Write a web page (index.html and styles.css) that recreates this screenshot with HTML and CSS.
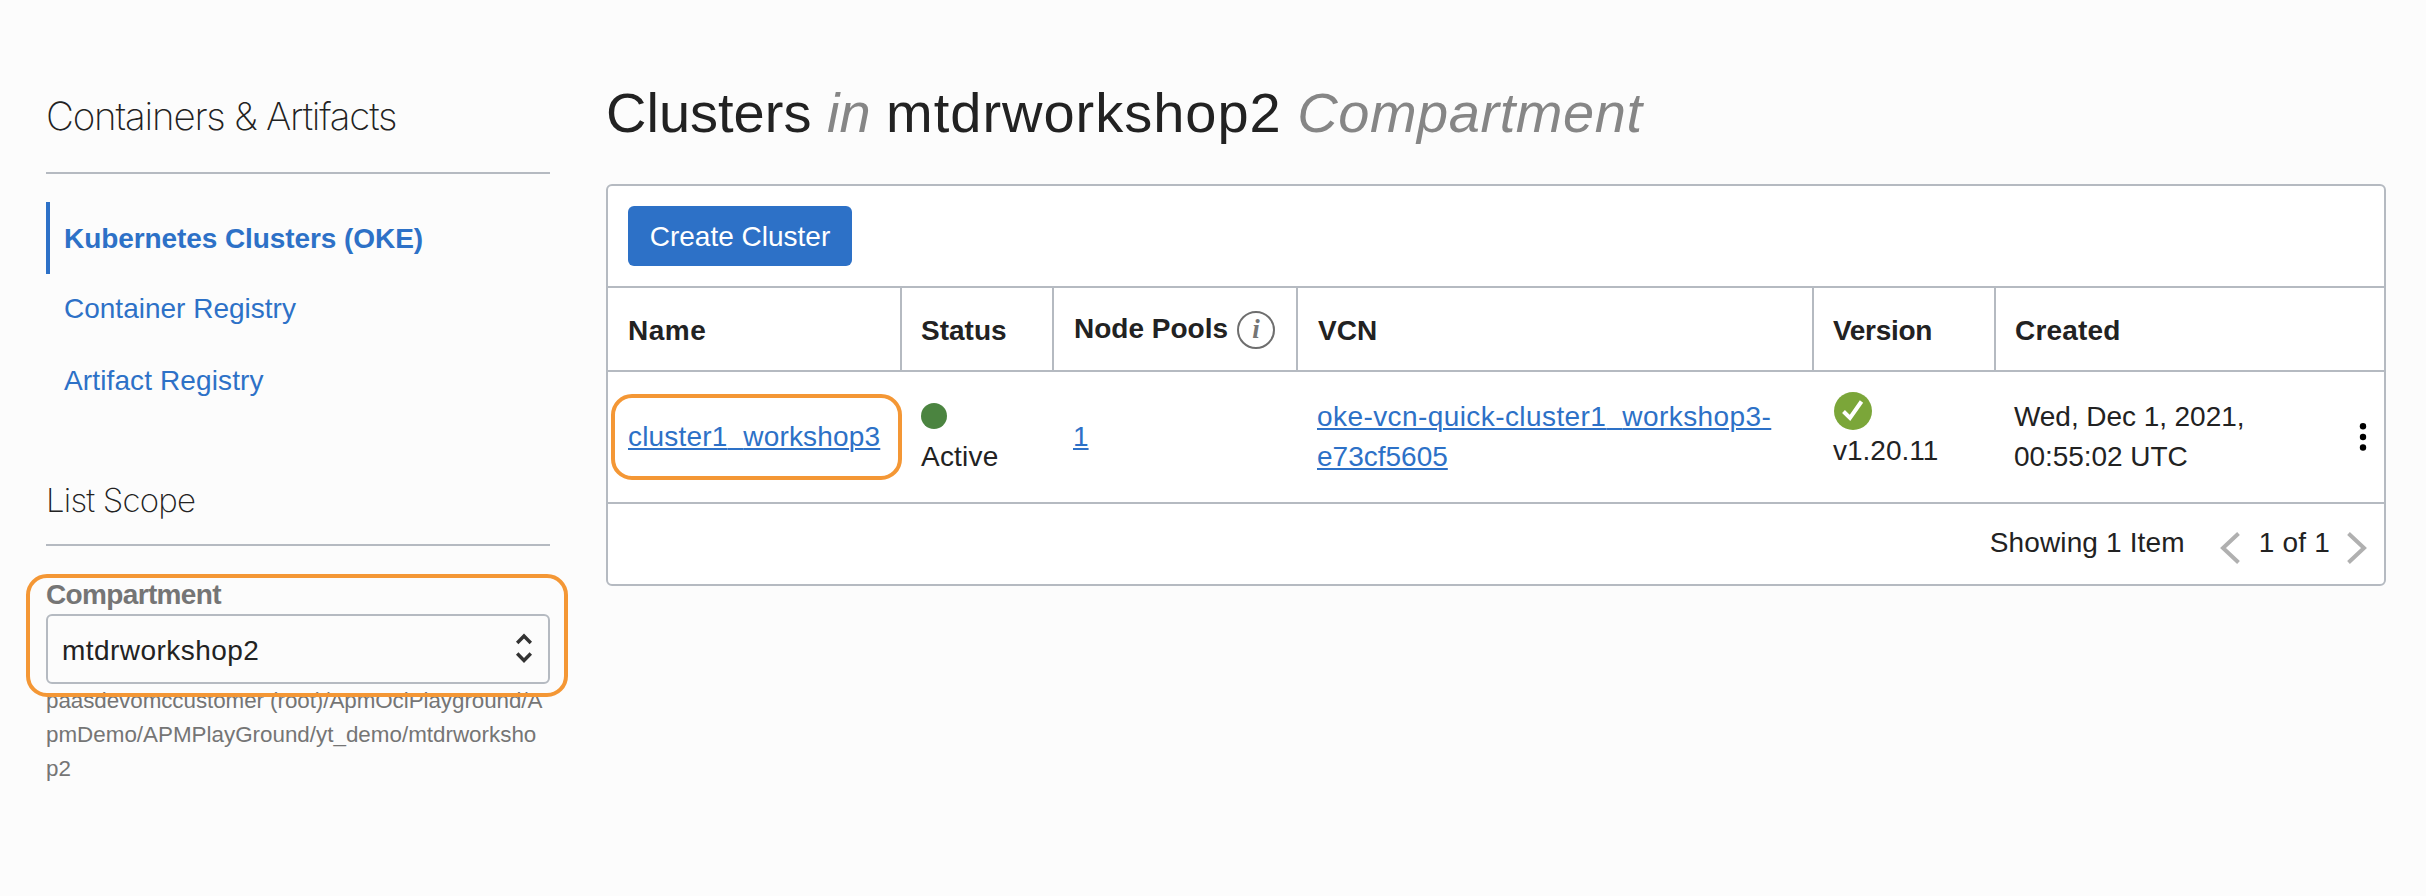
FILE: index.html
```html
<!DOCTYPE html>
<html lang="en">
<head>
<meta charset="utf-8">
<title>Clusters</title>
<link rel="stylesheet" href="styles.css">
</head>
<body>
<div class="page">
  <aside class="sidebar">
    <h2 class="side-title">Containers &amp; Artifacts</h2>
    <nav class="side-nav">
      <a class="nav-item active">Kubernetes Clusters (OKE)</a>
      <a class="nav-item">Container Registry</a>
      <a class="nav-item artifact">Artifact Registry</a>
    </nav>
    <h3 class="scope-title">List Scope</h3>
    <div class="compartment">
      <div class="label">Compartment</div>
      <div class="select"><span>mtdrworkshop2</span>
        <svg class="updown" width="20" height="34" viewBox="0 0 20 34"><path d="M3.200 12L10 5l6.800 7M3.200 22.500l6.800 7 6.800-7"/></svg>
      </div>
      <div class="path">paasdevomccustomer (root)/ApmOciPlayground/A<br><span class="path-mid">pmDemo/APMPlayGround/yt_demo/mtdrworksho</span><br>p2</div>
      <div class="highlight highlight-scope"></div>
    </div>
  </aside>
  <main class="main">
    <h1 class="title">Clusters <em>in</em> <span class="title-name">mtdrworkshop2</span> <em class="title-kind">Compartment</em></h1>
    <section class="panel">
      <div class="toolbar"><button class="create">Create Cluster</button></div>
      <div class="row head">
        <div class="cell col-name">Name</div>
        <div class="cell col-status">Status</div>
        <div class="cell pools"><span>Node Pools</span><svg class="info" width="38" height="38" viewBox="0 0 38 38"><circle cx="19" cy="19" r="18"/><text class="info-i" x="19" y="27" text-anchor="middle">i</text></svg></div>
        <div class="cell">VCN</div>
        <div class="cell col-version">Version</div>
        <div class="cell col-created">Created</div>
      </div>
      <div class="row body">
        <div class="cell name"><a class="link link-name">cluster1<span class="gap">_</span>workshop3</a><div class="highlight highlight-name"></div></div>
        <div class="cell status"><i class="dot"></i>Active</div>
        <div class="cell middle"><a class="link">1</a></div>
        <div class="cell"><a class="link"><span class="vcn-line">oke-vcn-quick-cluster1<span class="gap">_</span>workshop3-</span><br>e73cf5605</a></div>
        <div class="cell version"><svg class="check" width="38" height="38" viewBox="0 0 38 38"><circle cx="19" cy="19" r="19" fill="#7ba639"/><path d="M9.500 19.500l6.500 6.500L27.500 9.500" fill="none" stroke="#fff" stroke-width="4"/></svg>v1.20.11</div>
        <div class="cell created"><div>Wed, Dec 1, 2021,<br>00:55:02 UTC</div>
          <svg class="kebab" width="8" height="30" viewBox="0 0 8 30"><circle cx="4" cy="3.200" r="3.200"/><circle cx="4" cy="14" r="3.200"/><circle cx="4" cy="24.500" r="3.200"/></svg></div>
      </div>
      <div class="footer">
        <span class="showing">Showing 1 Item</span>
        <svg class="chev" width="20" height="32" viewBox="0 0 20 32"><path d="M18.500 1.500L3 16l15.500 14.500"/></svg>
        <span class="pages">1 of 1</span>
        <svg class="chev" width="20" height="32" viewBox="0 0 20 32"><path d="M1.500 1.500L17 16 1.500 30.500"/></svg>
      </div>
    </section>
  </main>
</div>
</body>
</html>
```

FILE: styles.css
```css
* { box-sizing: border-box; }
body {
  margin: 0;
  background: #fcfcfc;
  color: #222;
  font: 28px/40px "Liberation Sans", Arial, sans-serif;
}
.page { display: flex; height: 896px; overflow: hidden; }
.sidebar { width: 606px; padding: 88px 56px 0 46px; }
h1, h2, h3 { margin: 0; }
.side-title {
  height: 86px;
  border-bottom: 2px solid #b5bac1;
  font: 200 38.500px/56px Inter, sans-serif;
  letter-spacing: -1.180px;
}
.side-nav { padding-top: 28px; }
.nav-item {
  display: flex;
  align-items: center;
  height: 72px;
  padding: 0 0 3px 18px;
  color: #2d71c7;
}
.nav-item.active {
  border-left: 4px solid #2d71c7;
  padding: 1px 0 0 14px;
  font-weight: 700;
  letter-spacing: -0.080px;
}
.nav-item.artifact { letter-spacing: 0.120px; }
.scope-title {
  margin-top: 60px;
  height: 68px;
  border-bottom: 2px solid #b5bac1;
  font: 200 33px/44px Inter, sans-serif;
  letter-spacing: -0.800px;
}
.compartment { position: relative; padding-top: 28px; }
.label { height: 40px; padding-top: 0.500px; color: #757575; font-weight: 700; letter-spacing: -0.650px; }
.select {
  display: flex;
  align-items: center;
  justify-content: space-between;
  height: 70px;
  padding: 3px 14px 0;
  border: 2px solid #b5bac1;
  border-radius: 6px;
  letter-spacing: 0.450px;
}
.updown { margin-top: -6px; fill: none; stroke: #333; stroke-width: 3.400; }
.path { color: #757575; font-size: 22.400px; line-height: 34px; letter-spacing: -0.060px; }
.path-mid { letter-spacing: 0; }
.highlight { position: absolute; border: 4px solid #f49735; border-radius: 21px; pointer-events: none; }
.highlight-scope { left: -20px; top: 28px; width: 542px; height: 123px; }
.highlight-name { left: 3px; top: 22px; width: 291px; height: 86px; }
.main { width: 1780px; padding-top: 80px; }
.title { height: 104px; padding-top: 1px; font-size: 56px; line-height: 64px; font-weight: 400; }
.title em { color: #868686; }
.title-name { letter-spacing: 0.980px; }
.title-kind { letter-spacing: 0.550px; }
.panel { height: 402px; border: 2px solid #b5bac1; border-radius: 6px; background: #fff; }
.toolbar { height: 100px; padding: 20px; }
.create {
  display: block;
  width: 224px;
  height: 60px;
  padding: 1px 0 0;
  border: 0;
  border-radius: 6px;
  background: #2d71c7;
  color: #fff;
  font: inherit;
}
.row { display: grid; grid-template-columns: 294px 152px 244px 516px 182px 1fr; border-top: 2px solid #b5bac1; }
.head { height: 84px; font-weight: 700; }
.head .cell { padding: 22.500px 0 0 20px; border-right: 2px solid #b5bac1; }
.head .cell:last-child { border-right: 0; }
.head .col-status, .head .col-version, .head .col-created { padding-left: 19px; }
.col-name { letter-spacing: 0.500px; }
.col-version { letter-spacing: -0.300px; }
.col-created { letter-spacing: 0.200px; }
.pools { display: flex; }
.pools > span { margin-top: -2px; }
.info { margin: 0.500px 0 0 9px; }
.info circle { fill: none; stroke: #6e6e6e; stroke-width: 2; }
.info-i { font: italic 700 27px "Liberation Serif", serif; fill: #757575; }
.body { height: 132px; }
.body .cell { padding: 24.500px 0 0 19px; }
.body .name { position: relative; padding: 44.500px 0 0 20px; }
.body .middle { padding-top: 44.500px; }
.link { color: #2d71c7; text-decoration: underline; text-decoration-thickness: 2px; text-underline-offset: 2px; }
.link-name { letter-spacing: 0.180px; }
.vcn-line { letter-spacing: 0.420px; }
.gap { color: transparent; text-decoration-skip-ink: none; }
.body .status { display: flex; flex-direction: column; padding-top: 31px; letter-spacing: 0.200px; }
.dot { width: 26px; height: 26px; border-radius: 50%; background: #4b8440; margin-bottom: 7.500px; }
.body .version { display: flex; flex-direction: column; padding-top: 20px; }
.check { margin: 0 0 0.500px 1px; }
.body .created { display: flex; justify-content: space-between; padding-left: 18px; padding-right: 17px; letter-spacing: -0.060px; }
.kebab { margin-top: 26.500px; fill: #000; }
.footer { display: flex; justify-content: flex-end; height: 82px; padding: 18.500px 17px 0 0; border-top: 2px solid #b5bac1; }
.chev { fill: none; stroke: #b0b0b0; stroke-width: 4; margin-top: 9.500px; }
.showing { margin-right: 35px; letter-spacing: 0.150px; }
.pages { margin: 0 17px 0 19px; letter-spacing: 0.200px; }
```
